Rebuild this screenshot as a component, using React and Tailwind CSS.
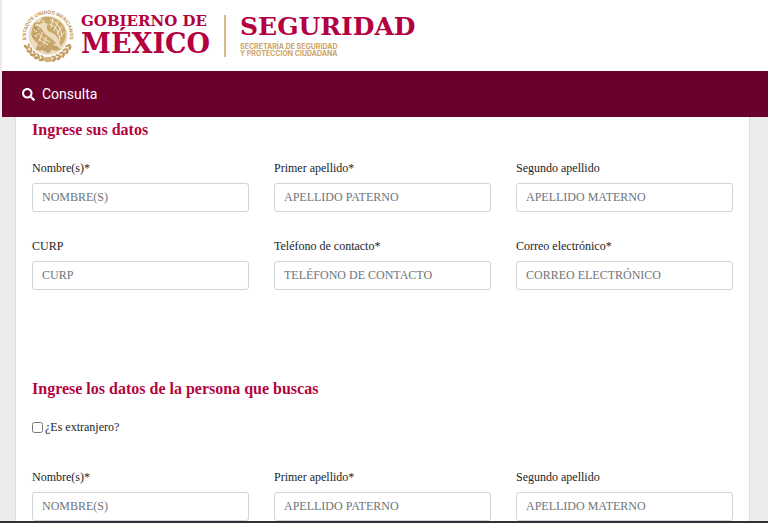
import { FaSearch } from 'react-icons/fa';

const personFields = [
  { name: 'nombre', label: 'Nombre(s)*', placeholder: 'NOMBRE(S)' },
  { name: 'apellido-paterno', label: 'Primer apellido*', placeholder: 'APELLIDO PATERNO' },
  { name: 'apellido-materno', label: 'Segundo apellido', placeholder: 'APELLIDO MATERNO' },
];

const contactFields = [
  { name: 'curp', label: 'CURP', placeholder: 'CURP' },
  { name: 'telefono', label: 'Teléfono de contacto*', placeholder: 'TELÉFONO DE CONTACTO', type: 'tel' },
  { name: 'correo', label: 'Correo electrónico*', placeholder: 'CORREO ELECTRÓNICO', type: 'email' },
];

// leaf angles along the lower half of the seal
const leaves = [27, 39, 51, 63, 75, 105, 117, 129, 141, 153];

const Seal = () => (
  <svg viewBox="0 0 108 108" className="size-[54px] shrink-0" role="img" aria-label="Escudo Nacional">
    <defs>
      <path id="seal-arc" d="M16 76 A44 44 0 1 1 92 76" />
    </defs>
    <text fill="#b98f4c" fontSize="10" fontWeight="700" fontFamily="Liberation Sans, sans-serif">
      <textPath href="#seal-arc" startOffset="50%" textAnchor="middle">ESTADOS UNIDOS MEXICANOS</textPath>
    </text>
    <circle cx="54" cy="53" r="39" fill="#ecdcbf" />
    {/* wings */}
    <g fill="#cba86c">
      <path d="M42 17 C60 12 82 22 88 40 C92 54 88 68 78 74 C78 60 70 50 58 46 C50 42 50 36 54 30 L46 27 L36 30 Z" />
      <path d="M24 34 C32 32 40 36 44 44 C50 54 62 58 70 68 L58 76 C40 76 24 66 20 50 Z" />
    </g>
    <g fill="none" stroke="#f6ecd9" strokeWidth="2">
      <path d="M58 22 C72 26 80 38 82 56" />
      <path d="M56 30 C70 34 76 46 78 64" />
      <path d="M26 42 C36 46 42 60 58 66" />
      <path d="M24 52 C34 56 40 66 54 71" />
      <path d="M64 18 L60 38 M74 24 L66 44 M82 34 L72 50 M87 46 L76 57" />
      <path d="M36 38 L30 54 M43 46 L36 64 M51 56 L45 70" />
      <path d="M45 21 C40 24 42 28 48 25" />
    </g>
    {/* snake and nopal */}
    <g fill="none" stroke="#b9935a" strokeWidth="2.5" strokeLinecap="round">
      <path d="M37 29 C28 25 22 34 30 39 C38 43 34 49 27 50 C20 54 28 60 36 58" />
      <path d="M46 76 V84 M60 72 L66 82 M38 68 L32 77 M30 80 H78" />
    </g>
    <g fill="#c4a26b">
      <ellipse cx="54" cy="80" rx="6" ry="8" />
      <ellipse cx="40" cy="78" rx="8" ry="5" transform="rotate(-20 40 78)" />
      <ellipse cx="68" cy="78" rx="8" ry="5" transform="rotate(20 68 78)" />
    </g>
    {/* laurel and oak wreath */}
    <g fill="#c39d60">
      {leaves.map((angle) => (
        <g key={angle} transform={`rotate(${angle} 54 54)`}>
          <ellipse cx="103" cy="54" rx="3" ry="6" transform="rotate(-25 103 54)" />
          <ellipse cx="97" cy="54" rx="2" ry="5" transform="rotate(25 97 54)" />
        </g>
      ))}
    </g>
    <path d="M45 98 Q54 93 63 98 L60 106 H48 Z" fill="#d2b47f" />
  </svg>
);

const Header = () => (
  <header className="flex h-[71px] shrink-0 items-center bg-white pl-[19px] font-['DejaVu_Serif'] font-bold text-[#b30040]">
    <Seal />
    <div className="ml-[6px]">
      <p className="text-[15px] leading-4">GOBIERNO DE</p>
      <p className="text-[27px] leading-[30px]">MÉXICO</p>
    </div>
    <div className="ml-[14px] border-l-2 border-[#d9b98a] pl-[14px]">
      <p className="text-[25px] leading-6">SEGURIDAD</p>
      <div className="pt-1 font-['Inter'] text-[7px] leading-[7px] text-[#cda468]">
        <p>SECRETARÍA DE SEGURIDAD</p>
        <p>Y PROTECCIÓN CIUDADANA</p>
      </div>
    </div>
  </header>
);

const Field = ({ id, label, placeholder, type = 'text' }) => (
  <div>
    <label htmlFor={id} className="block leading-[18px]">{label}</label>
    <input
      id={id}
      type={type}
      placeholder={placeholder}
      className="mt-[6px] block h-[29px] w-full rounded-[3px] border border-[#ced4da] bg-white px-[9px] placeholder-[#6c757d] focus:border-[#80bdff] focus:outline-none"
    />
  </div>
);

const FieldRow = ({ fields, prefix }) => (
  <div className="grid grid-cols-3 gap-x-[25px]">
    {fields.map(({ name, ...field }) => (
      <Field key={name} id={`${prefix}-${name}`} {...field} />
    ))}
  </div>
);

const SectionTitle = ({ children }) => (
  <h2 className="text-[16px] leading-5 font-bold text-[#b3063f]">{children}</h2>
);

const App = () => {
  return (
    <div className="flex h-screen flex-col overflow-hidden border-b-2 border-[#323236] bg-[#ebebeb] pl-[2px]">
      <Header />
      <nav className="flex h-[46px] shrink-0 items-center bg-[#6a002e] pl-5 font-['Roboto'] text-[14px] text-white">
        <a href="#consulta" className="flex items-center gap-[7px]">
          <FaSearch className="size-[13px]" />
          Consulta
        </a>
      </nav>
      <main className="min-h-0 flex-1 overflow-hidden pr-[18px] pl-[13px] font-['Liberation_Serif'] text-[12px] text-[#212529]">
        <form className="border-x border-[#dfdfdf] bg-white px-4 pb-8">
          <section className="pt-[3px]">
            <SectionTitle>Ingrese sus datos</SectionTitle>
            <div className="mt-[19px] space-y-[25px]">
              <FieldRow fields={personFields} prefix="solicitante" />
              <FieldRow fields={contactFields} prefix="solicitante" />
            </div>
          </section>
          <section className="pt-[89px]">
            <SectionTitle>Ingrese los datos de la persona que buscas</SectionTitle>
            <label className="mt-[19px] mb-8 flex items-center gap-[2px] leading-[18px]">
              <input type="checkbox" className="size-[11px]" />
              ¿Es extranjero?
            </label>
            <FieldRow fields={personFields} prefix="buscada" />
          </section>
        </form>
      </main>
    </div>
  );
};

export default App;
